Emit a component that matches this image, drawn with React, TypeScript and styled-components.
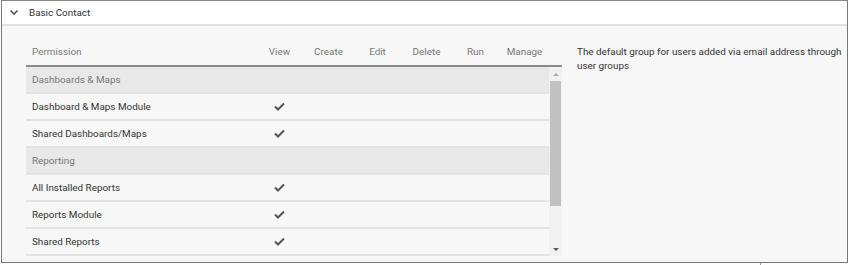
import styled, { createGlobalStyle } from 'styled-components';

const Global = createGlobalStyle`
  body {
    margin: 0;
    background: #fff;
    font-family: Roboto, 'Liberation Sans', sans-serif;
  }
`;

const Panel = styled.div`
  width: 845px;
  margin-left: 1px;
  border: 1px solid #777;
  border-top: 1px solid #888;
  background: #f7f7f7;
`;

const PanelHeader = styled.div`
  height: 22px;
  display: flex;
  align-items: center;
  gap: 10px;
  padding: 0 0 1px 7px;
  background: #fff;
  border-bottom: 2px solid #e2e2e2;
  font-size: 9.9px;
  color: #333;
`;

const PanelBody = styled.div`
  display: flex;
  padding: 12px 0 6px 24px;
  gap: 15px;
`;

const TableWrap = styled.div`
  width: 536px;
  display: flex;
  flex-direction: column;
`;

const HeadRow = styled.div`
  display: grid;
  grid-template-columns: 229px repeat(6, 49px) 13px;
  height: 27px;
  align-items: center;
  border-bottom: 2px solid #8a8a8a;
  font-size: 9.9px;
  color: #777;
`;

const HeadCell = styled.div<{ $left?: boolean }>`
  text-align: ${(p) => (p.$left ? 'left' : 'center')};
  padding-left: ${(p) => (p.$left ? '6px' : '0')};
`;

const Scroller = styled.div`
  display: flex;
  height: 189px;
`;

const Rows = styled.div`
  width: 523px;
  display: flex;
  flex-direction: column;
`;

const Row = styled.div<{ $group?: boolean }>`
  display: grid;
  grid-template-columns: 229px repeat(6, 49px);
  height: 25px;
  flex: none;
  align-items: center;
  border-bottom: 2px solid #e3e3e3;
  background: ${(p) => (p.$group ? '#e8e8e8' : '#f7f7f7')};
  font-size: 9.9px;
  color: ${(p) => (p.$group ? '#777' : '#333')};
`;

const NameCell = styled.div`
  padding-left: 6px;
`;

const CheckCell = styled.div`
  display: flex;
  justify-content: center;
  padding-bottom: 1px;
`;

const ScrollTrack = styled.div`
  width: 13px;
  background: #f1f1f1;
  display: flex;
  flex-direction: column;
  align-items: center;
`;

const Arrow = styled.div<{ $down?: boolean }>`
  height: 14px;
  display: flex;
  align-items: center;
  justify-content: center;
  &::before {
    content: '';
    border-left: 3px solid transparent;
    border-right: 3px solid transparent;
    ${(p) => (p.$down ? 'border-top: 3px solid #555;' : 'border-bottom: 3px solid #aaa;')}
  }
`;

const Thumb = styled.div`
  width: 11px;
  height: 125px;
  background: #c1c1c1;
`;

const Description = styled.div`
  width: 268px;
  padding-top: 7px;
  font-size: 9.9px;
  line-height: 14px;
  color: #333;
`;

const Tick = styled.div`
  width: 1px;
  height: 4px;
  margin-left: 760px;
  background: #999;
`;

const Chevron = () => (
  <svg width="10" height="8" viewBox="0 0 10 8">
    <path d="M1.5 2.5 L5 6 L8.5 2.5" fill="none" stroke="#555" strokeWidth="1.6" />
  </svg>
);

const Check = () => (
  <svg width="11" height="9" viewBox="0 0 11 9">
    <path d="M1 4.5 L4 7.5 L10 1.5" fill="none" stroke="#555" strokeWidth="2" />
  </svg>
);

const columns = ['View', 'Create', 'Edit', 'Delete', 'Run', 'Manage'];

type Item = { name: string; group?: boolean; perms?: boolean[] };

const items: Item[] = [
  { name: 'Dashboards & Maps', group: true },
  { name: 'Dashboard & Maps Module', perms: [true] },
  { name: 'Shared Dashboards/Maps', perms: [true] },
  { name: 'Reporting', group: true },
  { name: 'All Installed Reports', perms: [true] },
  { name: 'Reports Module', perms: [true] },
  { name: 'Shared Reports', perms: [true] }
];

export default function App() {
  return (
    <>
      <Global />
      <Panel>
        <PanelHeader>
          <Chevron />
          <span>Basic Contact</span>
        </PanelHeader>
        <PanelBody>
          <TableWrap>
            <HeadRow>
              <HeadCell $left>Permission</HeadCell>
              {columns.map((c) => (
                <HeadCell key={c}>{c}</HeadCell>
              ))}
              <span />
            </HeadRow>
            <Scroller>
              <Rows>
                {items.map((it) => (
                  <Row key={it.name} $group={it.group}>
                    <NameCell>{it.name}</NameCell>
                    {!it.group &&
                      columns.map((c, i) => (
                        <CheckCell key={c}>{it.perms?.[i] && <Check />}</CheckCell>
                      ))}
                  </Row>
                ))}
              </Rows>
              <ScrollTrack>
                <Arrow />
                <Thumb />
                <div style={{ flex: 1 }} />
                <Arrow $down />
              </ScrollTrack>
            </Scroller>
          </TableWrap>
          <Description>
            The default group for users added via email address through user groups
          </Description>
        </PanelBody>
      </Panel>
      <Tick />
    </>
  );
}
